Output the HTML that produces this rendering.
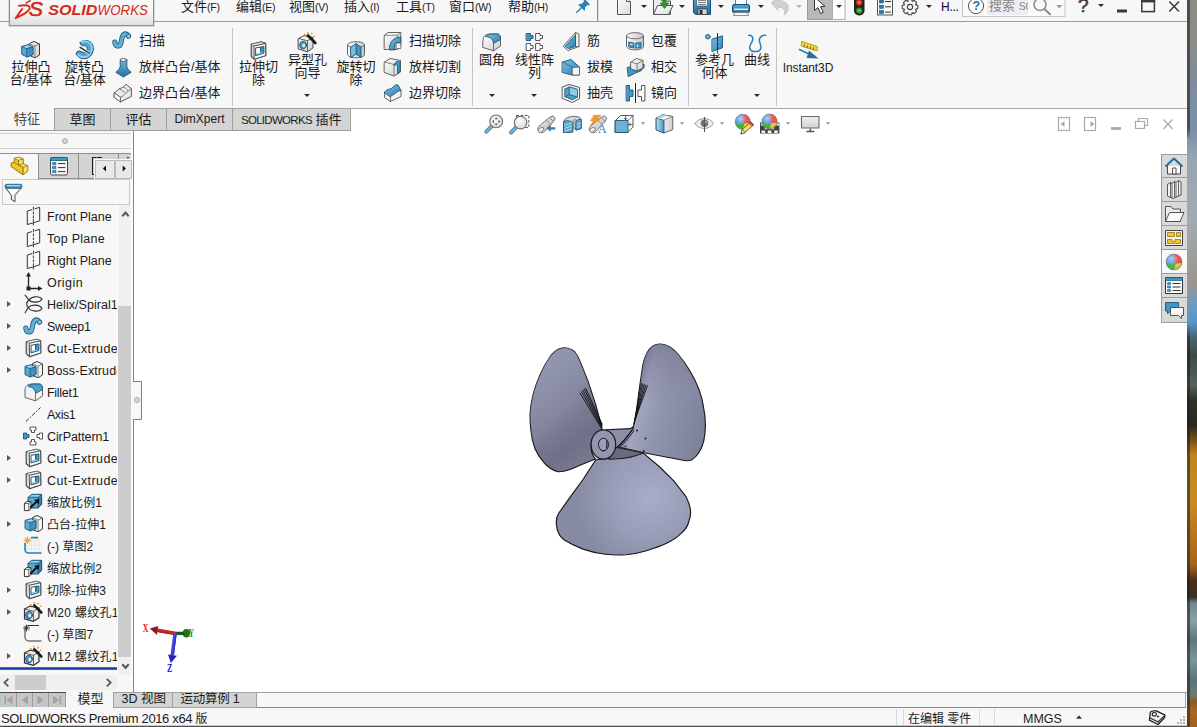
<!DOCTYPE html>
<html lang="zh-CN">
<head>
<meta charset="utf-8">
<title>SOLIDWORKS Premium 2016 x64</title>
<style>
*{box-sizing:border-box;margin:0;padding:0}
html,body{width:1197px;height:727px;overflow:hidden;background:#fff}
body{font-family:"Liberation Sans","Noto Sans CJK SC",sans-serif;font-size:13px;color:#1a1a1a;position:relative}
.abs{position:absolute}
#win{position:absolute;left:0;top:0;width:1187px;height:727px;background:#f7f7f7;overflow:hidden}
#wall{position:absolute;left:1187px;top:0;width:10px;height:727px;
 background:linear-gradient(to bottom,#8b8d85 0,#8a8e88 45px,#7e8d9c 75px,#7c90a6 130px,#97a5b1 160px,#a0abb4 220px,#9d9f9c 255px,#9a968c 285px,#6f9cc0 303px,#5a96c8 322px,#4a6878 336px,#3e4a44 355px,#55655c 385px,#2e342a 400px,#2a2a1e 425px,#7a5018 440px,#c08420 455px,#c98c24 500px,#b4741c 540px,#a4641a 565px,#4a3218 580px,#3a3020 597px,#6c8890 603px,#8aa0aa 620px,#60787c 640px,#7c949c 660px,#5c747a 680px,#6f7a70 695px,#8a5a24 702px,#a8681e 712px,#a0601c 727px)}
#walledge{position:absolute;left:1187px;top:0;width:3px;height:727px;background:linear-gradient(to bottom,rgba(60,60,60,.8) 0,rgba(60,60,60,.8) 128px,rgba(60,60,60,0) 140px,rgba(40,40,40,0) 325px,rgba(30,30,30,.6) 340px,rgba(30,30,30,.55) 727px)}
/* menu bar */
#menubar{position:absolute;left:0;top:0;width:1187px;height:21px;background:#f7f7f7}
#menuline{position:absolute;left:0;top:21px;width:1187px;height:1px;background:#9c9c9c}
#logo{position:absolute;left:9px;top:-2px;width:145px;height:28px;border:1px solid #8f8f8f;box-shadow:0 0 0 .4px #aaa;background:linear-gradient(to bottom,#fafafa 0,#f4f4f4 55%,#dedede 100%)}
.menu{position:absolute;top:-3px;height:20px;line-height:20px;font-size:13px;white-space:nowrap;color:#1a1a1a}
.menu small{font-size:10.5px;letter-spacing:-.2px}
.dd{position:absolute;width:0;height:0;border-left:3px solid transparent;border-right:3px solid transparent;border-top:3.2px solid #2a2a2a;margin-left:.5px;margin-top:.6px}
.hd{border-top-color:#9a9a9a !important;border-left-width:2.8px !important;border-right-width:2.8px !important;border-top-width:3px !important;margin:0 !important}
/* ribbon */
#ribbon{position:absolute;left:0;top:22px;width:1187px;height:86px;background:#f7f7f7}
.vsep{position:absolute;top:28px;width:1px;height:78px;background:#c4c4c4}
.big{position:absolute;text-align:center;font-size:13px;line-height:13px;white-space:nowrap;transform:translateX(-50%)}
.sm{position:absolute;font-size:13px;line-height:16px;height:16px;white-space:nowrap}
#ribline{position:absolute;left:54px;top:108px;width:1133px;height:1px;background:#a6a6a6}
/* cm tabs */
.ctab{position:absolute;top:108px;height:23px;border:1px solid #9e9e9e;background:#d4d4d4;text-align:center;line-height:21px;font-size:13px;white-space:nowrap}
/* viewport */
#view{position:absolute;left:134px;top:109px;width:1053px;height:583px;background:#fff}
/* left panel */
#lp{position:absolute;left:0;top:131px;width:134px;height:561px;background:#f7f7f7;border-right:1px solid #858585}
.row{position:absolute;left:47px;height:22px;line-height:22px;padding-top:1px;font-size:12px;white-space:nowrap;width:70px;overflow:hidden;letter-spacing:.05px}
.exp{position:absolute;left:7px;width:0;height:0;border-top:3.500px solid transparent;border-bottom:3.500px solid transparent;border-left:4.300px solid #585858;margin-top:.5px}
.ti{position:absolute;left:22px;width:22px;height:22px}
/* bottom */
.btab{position:absolute;top:692px;height:16px;border:1px solid #a0a0a0;background:#d4d4d4;font-size:13px;line-height:13px;text-align:center;white-space:nowrap}
#status{position:absolute;left:0;top:708px;width:1187px;height:19px;background:#f7f7f7;font-size:13px;line-height:21px}
svg{position:absolute;overflow:visible}
</style>
</head>
<body>
<div id="win">

<!-- ===== viewport ===== -->
<div id="view"></div>

<!-- ===== menu bar ===== -->
<div id="menuline"></div>
<div id="logo"></div>
<!--LOGO-->
<div class="menu" style="left:181px">文件<small>(F)</small></div>
<div class="menu" style="left:236px">编辑<small>(E)</small></div>
<div class="menu" style="left:289px">视图<small>(V)</small></div>
<div class="menu" style="left:344px">插入<small>(I)</small></div>
<div class="menu" style="left:396px">工具<small>(T)</small></div>
<div class="menu" style="left:449px">窗口<small>(W)</small></div>
<div class="menu" style="left:508px">帮助<small>(H)</small></div>
<!--QAT-S-->
<svg style="left:0;top:0" width="1187" height="26" viewBox="0 0 1187 26">
 <defs>
  <linearGradient id="gPaper" x1="0" y1="0" x2="1" y2="1"><stop offset="0" stop-color="#ffffff"/><stop offset="1" stop-color="#d9d9d9"/></linearGradient>
  <linearGradient id="gBlue" x1="0" y1="0" x2="0" y2="1"><stop offset="0" stop-color="#5aa9d3"/><stop offset="1" stop-color="#1f6d9e"/></linearGradient>
  <clipPath id="clipTop"><rect x="0" y="0" width="1187" height="21"/></clipPath>
 </defs>
 <!-- logo -->
 <g fill="#d8281b">
  <path d="M18.200 5.900 C22 5.200 27 4.800 29 6.200 C31.500 8.200 28.500 12.400 15.600 18.200 L22.500 8.400" fill="none" stroke="#d8281b" stroke-width="1.900" stroke-linejoin="round" stroke-linecap="butt"/>
  <path d="M25.600 3.300 L30.800 0.300" fill="none" stroke="#d8281b" stroke-width="1.500"/>
  <text x="28.800" y="15.600" font-family="Liberation Sans,sans-serif" font-size="19.800" font-weight="400" font-style="italic" textLength="14.200" lengthAdjust="spacingAndGlyphs" stroke="#d8281b" stroke-width=".55">S</text>
  <text x="48.300" y="15.300" font-family="Liberation Sans,sans-serif" font-size="14.600" font-weight="700" font-style="italic" textLength="49" lengthAdjust="spacingAndGlyphs">SOLID</text>
  <text x="97.600" y="15.300" font-family="Liberation Sans,sans-serif" font-size="14.600" font-weight="400" font-style="italic" textLength="50.400" lengthAdjust="spacingAndGlyphs">WORKS</text>
 </g>
 <g clip-path="url(#clipTop)">
 <!-- pin -->
 <g transform="translate(582 7) rotate(45)" fill="#2d7db3">
  <rect x="-3.6" y="-7.5" width="7.2" height="2"/>
  <rect x="-2.4" y="-6" width="4.8" height="5"/>
  <path d="M-4.6 1 L4.6 1 L3.2 -1.4 L-3.2 -1.4 Z"/>
  <rect x="-0.7" y="1" width="1.4" height="7"/>
 </g>
 <!-- separator -->
 <rect x="597" y="0" width="1" height="21" fill="#8e8e8e"/>
 <rect x="598" y="0" width="1" height="21" fill="#dcdcdc"/>
 <!-- new -->
 <path d="M617.5 -3 L626.5 -3 L630.5 1.5 L630.5 14.5 L617.5 14.5 Z" fill="url(#gPaper)" stroke="#555" stroke-width="1"/>
 <path d="M626.5 -3 L626.5 1.5 L630.5 1.5" fill="#eee" stroke="#555" stroke-width="1"/>
 <!-- open -->
 <path d="M653.5 -2 L660 -2 L662 1 L670.5 1 L670.5 14.5 L653.5 14.5 Z" fill="#ececec" stroke="#555"/>
 <path d="M657.5 5.5 L673 5.5 L668.5 14.5 L653.5 14.5 Z" fill="url(#gPaper)" stroke="#555"/>
 <path d="M663 -3 L666 -3 L666 3 L669 3 L664.5 8.5 L660 3 L663 3 Z" fill="#2e9a22" stroke="#1d6e14" stroke-width=".6"/>
 <!-- save -->
 <path d="M693.5 -3 L710.5 -3 L710.5 14.5 L695.5 14.5 L693.5 12.5 Z" fill="url(#gBlue)" stroke="#174f74"/>
 <rect x="696.5" y="-3" width="11" height="9" fill="#f2f2f2" stroke="#555" stroke-width=".7"/>
 <path d="M698 0.5 H706 M698 2.5 H706 M698 4.5 H706" stroke="#666" stroke-width=".8"/>
 <rect x="698" y="9" width="9" height="5.5" fill="#d8d8d8" stroke="#333" stroke-width=".7"/>
 <rect x="699.5" y="10" width="3" height="4" fill="#333"/>
 <!-- print -->
 <path d="M735.5 -3 L746.5 -3 L746.5 5 L735.5 5 Z" fill="#fafafa" stroke="#777"/>
 <rect x="732.5" y="4.5" width="17" height="8" rx="1.5" fill="url(#gBlue)" stroke="#174f74"/>
 <rect x="734" y="8.5" width="14" height="1.6" fill="#d6ecf7"/>
 <path d="M734.5 12.5 L747.5 12.5 L748.5 15.5 L733.5 15.5 Z" fill="#f4f4f4" stroke="#777" stroke-width=".8"/>
 <!-- undo (disabled) -->
 <path d="M771 3 L778 -3 L778 0.5 C785 0 789.5 4 788 10 C787.4 12.4 786 14 784 14.8 C785.4 12 785.4 7.6 778 7.2 L778 10.5 Z" fill="#d0d0d0" stroke="#bdbdbd" stroke-width=".7"/>
 <!-- select -->
 <rect x="807.5" y="-1" width="25" height="20.5" fill="#b9b9b9" stroke="#7da0c6"/>
 <rect x="832.5" y="-1" width="12.5" height="20.5" fill="#fdfdfd" stroke="#adadad"/>
 <path d="M814.5 -3 L814.5 10.5 L818 7.6 L820.6 13.6 L823.2 12.4 L820.6 6.6 L825 6.4 Z" fill="#fff" stroke="#333" stroke-width="1"/>
 <!-- traffic light -->
 <rect x="854" y="-4" width="10.5" height="19.5" rx="5" fill="#222"/>
 <circle cx="859.2" cy="2.4" r="3.1" fill="#e02a1a"/>
 <circle cx="859.2" cy="10.6" r="3.1" fill="#2d9a22"/>
 <path d="M857.6 2.4 H860.8 M859.2 .8 V4" stroke="#ff9a8a" stroke-width=".7"/>
 <path d="M857.6 10.6 H860.8 M859.2 9 V12.2" stroke="#9be08f" stroke-width=".7"/>
 <!-- options -->
 <rect x="877.5" y="-3" width="15" height="18" fill="#fafafa" stroke="#555"/>
 <g fill="#2d7db3" stroke="#174f74" stroke-width=".6"><rect x="879.5" y="0" width="4" height="3"/><rect x="879.5" y="5.3" width="4" height="3"/><rect x="879.5" y="10.6" width="4" height="3"/></g>
 <path d="M885 1.5 H891 M885 6.8 H891 M885 12.1 H891" stroke="#333" stroke-width="1"/>
 <!-- gear -->
 <g transform="translate(910 7)" fill="none" stroke="#444" stroke-width="1.1">
  <path d="M-1.6 -7.8 L1.6 -7.8 L2.2 -5.6 L4.3 -6.7 L6.6 -4.4 L5.5 -2.3 L7.8 -1.6 L7.8 1.6 L5.5 2.3 L6.6 4.4 L4.3 6.7 L2.2 5.6 L1.6 7.8 L-1.6 7.8 L-2.2 5.6 L-4.3 6.7 L-6.6 4.4 L-5.5 2.3 L-7.8 1.6 L-7.8 -1.6 L-5.5 -2.3 L-6.6 -4.4 L-4.3 -6.7 L-2.2 -5.6 Z" fill="#f4f4f4" stroke-linejoin="round"/>
  <circle r="2.6" fill="#f7f7f7"/>
 </g>
 <!-- search box -->
 <rect x="962.5" y="-2" width="102.5" height="18.5" fill="#fafafa" stroke="#c6c6c6"/>
 <rect x="987" y="-1" width="41" height="16" fill="#eceef4"/>
 <circle cx="976" cy="6" r="7.6" fill="#fdfdfd" stroke="#555" stroke-width="1"/>
 <text x="972.6" y="10.4" font-family="Liberation Sans,sans-serif" font-size="12.5" font-weight="700" fill="#1f6fa8">?</text>
 <circle cx="1040" cy="4.5" r="6" fill="none" stroke="#8c8c8c" stroke-width="1.6"/>
 <path d="M1044.4 9 L1050 14.2" stroke="#8c8c8c" stroke-width="2.2" stroke-linecap="round"/>
 <path d="M1056.3 5 L1062.3 5 L1059.3 8.4 Z" fill="#9a9a9a"/>
 <!-- window buttons -->
 <rect x="1117" y="9.5" width="10" height="3" fill="#3a3a3a"/>
 <rect x="1141.8" y="-1" width="12.6" height="12.6" fill="none" stroke="#3a3a3a" stroke-width="1.5"/>
 <rect x="1141" y="0" width="14.2" height="2.4" fill="#3a3a3a"/>
 <path d="M1169.3 1.6 L1179 11.6 M1179 1.6 L1169.3 11.6" stroke="#3a3a3a" stroke-width="1.5"/>
 </g>
</svg>
<div class="dd" style="left:640px;top:4px"></div>
<div class="dd" style="left:678.5px;top:4px"></div>
<div class="dd" style="left:717.5px;top:4px"></div>
<div class="dd" style="left:757px;top:4px"></div>
<div class="dd" style="left:795.5px;top:4px;border-top-color:#b4b4b4"></div>
<div class="dd" style="left:835px;top:4px"></div>
<div class="dd" style="left:925.5px;top:4px"></div>
<div class="dd" style="left:1097.5px;top:3px"></div>
<div class="abs" style="left:941px;top:-3px;font-size:12px;line-height:20px;font-weight:400;color:#1a1040;letter-spacing:-.25px;-webkit-text-stroke:.12px #1a1040">H...</div>
<div class="abs" style="left:989px;top:-4px;font-size:13px;line-height:20px;color:#888;width:38.500px;overflow:hidden;white-space:nowrap">搜索 <span style="font-size:10.500px;letter-spacing:-.2px">SO</span></div>
<div class="abs" style="left:1078px;top:-6px;font-size:19px;line-height:24px;font-weight:400;color:#3c3c3c;-webkit-text-stroke:.55px #3c3c3c">?</div>
<!--QAT-E-->

<!-- ===== ribbon ===== -->
<!--RIBBON-S-->
<div class="vsep" style="left:232px"></div>
<div class="vsep" style="left:472px"></div>
<div class="vsep" style="left:688px"></div>
<div class="vsep" style="left:776px"></div>
<div class="big" style="left:31px;top:60px">拉伸凸<br>台/基体</div>
<div class="big" style="left:84.5px;top:60px">旋转凸<br>台/基体</div>
<div class="sm" style="left:139px;top:32.5px">扫描</div>
<div class="sm" style="left:139px;top:58.5px">放样凸台/基体</div>
<div class="sm" style="left:139px;top:84.5px">边界凸台/基体</div>
<div class="big" style="left:258.5px;top:60px">拉伸切<br>除</div>
<div class="big" style="left:307.5px;top:52.5px">异型孔<br>向导</div>
<div class="big" style="left:356px;top:60px">旋转切<br>除</div>
<div class="sm" style="left:409px;top:32.5px">扫描切除</div>
<div class="sm" style="left:409px;top:58.5px">放样切割</div>
<div class="sm" style="left:409px;top:84.5px">边界切除</div>
<div class="big" style="left:492px;top:52.5px">圆角</div>
<div class="big" style="left:534.5px;top:52.5px">线性阵<br>列</div>
<div class="sm" style="left:587px;top:32.5px">筋</div>
<div class="sm" style="left:587px;top:58.5px">拔模</div>
<div class="sm" style="left:587px;top:84.5px">抽壳</div>
<div class="sm" style="left:651px;top:32.5px">包覆</div>
<div class="sm" style="left:651px;top:58.5px">相交</div>
<div class="sm" style="left:651px;top:84.5px">镜向</div>
<div class="big" style="left:714.5px;top:52.5px">参考几<br>何体</div>
<div class="big" style="left:757px;top:52.5px">曲线</div>
<div class="big" id="i3d" style="left:808px;top:62px;font-size:12px;letter-spacing:-.1px">Instant3D</div>
<div class="dd" style="left:303.5px;top:93px"></div>
<div class="dd" style="left:488px;top:93px"></div>
<div class="dd" style="left:530.5px;top:93px"></div>
<div class="dd" style="left:711px;top:93px"></div>
<div class="dd" style="left:753px;top:93px"></div>
<svg style="left:0;top:0" width="1187" height="108" viewBox="0 0 1187 108">
 <defs>
  <linearGradient id="bl" x1="0" y1="0" x2="1" y2="1"><stop offset="0" stop-color="#7cc0e0"/><stop offset="1" stop-color="#2b7fb0"/></linearGradient>
  <linearGradient id="bl2" x1="0" y1="0" x2="0" y2="1"><stop offset="0" stop-color="#6fb6da"/><stop offset="1" stop-color="#256f9c"/></linearGradient>
  <linearGradient id="gr" x1="0" y1="0" x2="1" y2="1"><stop offset="0" stop-color="#ffffff"/><stop offset="1" stop-color="#cfcfcf"/></linearGradient>
  <linearGradient id="gr2" x1="0" y1="0" x2="1" y2="0"><stop offset="0" stop-color="#fdfdfd"/><stop offset="1" stop-color="#c4c4c4"/></linearGradient>
 </defs>
 <g stroke-linejoin="round" stroke-linecap="round">
 <!-- 1 extrude boss -->
 <g id="icExtr">
  <path d="M29.5 43.5 L34 41.5 L39.5 44 L39.5 55 L35 57.8 L29.5 55.5 Z" fill="url(#gr)" stroke="#3a3a3a" stroke-width="1"/>
  <path d="M35 46.2 L35 57.8 M29.5 43.5 L35 46.2 L39.5 44" fill="none" stroke="#666" stroke-width=".8"/>
  <path d="M22 46.5 L28 44.8 L33 46.8 L33 54.5 L27 57 L22 54.5 Z" fill="#5aaad6" stroke="#1b5577" stroke-width=".9"/>
  <path d="M22 46.5 L28 44.8 L33 46.8 L27 48.6 Z" fill="#a2d8ee" stroke="#1b5577" stroke-width=".7"/>
  <path d="M27 48.6 L33 46.8 L33 54.5 L27 57 Z" fill="#3f93c4" stroke="#1b5577" stroke-width=".7"/>
 </g>
 <!-- 2 revolve boss -->
 <path d="M80.200 42.600 C82 40 88 39.600 91 42.500 C94.500 46 94 52.500 90 56.500 C86 60 80 59.500 76.300 54.500 C75.800 52.500 77.500 50.800 80 51 C82.500 53 85.500 52.500 87 50 C88 48 86.500 45.800 84.300 45.600 C82.500 46.500 80 45 80.200 42.600 Z" fill="#4fa3cf" stroke="#14507a" stroke-width="1"/>
 <path d="M82 41.800 C85 40.800 89 41.500 91 44.500 C93 48 91.500 53 88.500 55.500 C85.500 58 81 57.500 78.500 55" fill="none" stroke="#8ed0ec" stroke-width="2" stroke-linecap="round"/>
 <path d="M80.100 47.400 L89.500 53.200" stroke="#f7f7f7" stroke-width="2.800" stroke-linecap="butt"/>
 <path d="M80.100 47.400 L89.500 53.200" stroke="#222" stroke-width="1.300"/>
 <!-- 3 sweep -->
 <g id="icSweep" fill="none" stroke-linecap="round">
  <path d="M114.800 42 C115 46.600 119.600 47.600 120.900 43 C122.100 39 121.800 34.200 125 33.900 C126.500 33.800 127.600 34.800 128.400 36" stroke="#1b5577" stroke-width="5.100"/>
  <path d="M114.800 42 C115 46.600 119.600 47.600 120.900 43 C122.100 39 121.800 34.200 125 33.900 C126.500 33.800 127.600 34.800 128.400 36" stroke="#62afd8" stroke-width="3.500"/>
  <circle cx="128.600" cy="36.200" r="2.100" fill="#8acbe8" stroke="#1b5577" stroke-width=".8"/>
 </g>
 <!-- 4 loft -->
 <path d="M120.200 60 L120.200 66.500 C120 68.500 118 70.500 115.800 72.300 L123.400 77 L131.200 72.300 C129 70.500 127 68.500 126.800 66.500 L126.800 60 Z" fill="url(#bl2)" stroke="#1b5577" stroke-width=".9"/>
 <ellipse cx="123.500" cy="60" rx="3.300" ry="1.500" fill="#f2f2f2" stroke="#444" stroke-width=".8"/>
 <!-- 5 boundary boss -->
 <path d="M114.400 93 L119.300 88.700 C121 88.300 122.400 87.700 123.200 87 C124.400 86 125 85 125.900 84.300 L131.400 88.700 L131.400 96.400 L120.400 101.900 L114.400 97.500 Z" fill="#e9e9e9" stroke="#4a4a4a" stroke-width=".9"/>
 <path d="M114.400 93 L120.400 97.200 L120.400 101.900 M120.400 97.200 C123 96.500 124.200 94.500 126 93 C127.600 91.700 129.500 90 131.400 88.700 M119.300 88.700 L124.500 92.300 M123.200 87 C125 87.500 126.500 88.500 128 91" fill="none" stroke="#5a5a5a" stroke-width=".7"/>
 <path d="M114.400 93 L120.400 97.200 L120.400 101.900 L114.400 97.500 Z" fill="#f8f8f8" stroke="#4a4a4a" stroke-width=".7"/>
 <!-- 6 extruded cut -->
 <g id="icCut"><path d="M251.2 44.3 L261.5 41.9 L265.6 43.3 L265.8 55.5 L254.5 59.3 L251.2 56.3 Z" fill="#dedede" stroke="#3c3c3c" stroke-width="1.100"/><path d="M251.2 44.3 L261.5 41.9 L265.6 43.4 L254.3 45.9 Z" fill="#f6f6f6" stroke="#555" stroke-width=".6"/><path d="M254.3 45.9 L265.6 43.4 L265.8 55.5 L254.5 59.2 Z" fill="#fbfbfb" stroke="#444" stroke-width=".9"/><path d="M256.0 47.9 L263.9 46.5 L263.9 53.1 L256.0 55.5 Z" fill="#ffffff" stroke="none"/><path d="M260.1 47.2 L263.9 46.5 L263.9 53.1 L260.1 52.4 Z" fill="#4a9fcc" stroke="none"/><path d="M260.1 47.2 L261.4 47.0 L261.4 52.6 L260.1 52.4 Z" fill="#175a82" stroke="none"/><path d="M256.0 52.9 L260.1 52.4 L263.9 53.1 L256.0 55.5 Z" fill="#a4d8ee" stroke="none"/><path d="M256.0 47.9 L263.9 46.5 L263.9 53.1 L256.0 55.5 Z" fill="none" stroke="#1b5577" stroke-width="1"/></g>
 <!-- 7 hole wizard -->
 <g id="icHole">
  <path d="M298.500 38.500 L304 35.700 L313 37.500 L313 47.800 L307.500 51.800 L298.500 49 Z" fill="url(#gr)" stroke="#444" stroke-width="1"/>
  <path d="M298.500 38.500 L307.500 40.800 L313 37.500 M307.500 40.800 L307.500 51.800" fill="none" stroke="#555" stroke-width=".9"/>
  <ellipse cx="303" cy="45" rx="3.400" ry="3.800" fill="#4a9fcc" stroke="#1b5577" stroke-width=".9"/>
  <ellipse cx="303.800" cy="45.500" rx="1.900" ry="2.300" fill="#e4f2f9" stroke="#1b5577" stroke-width=".5"/>
  <path d="M308 35.500 L315.300 43" stroke="#1c1c1c" stroke-width="2.600"/>
  <g fill="#f08a1c"><circle cx="304.500" cy="34.600" r=".9"/><circle cx="308" cy="32.800" r=".9"/><circle cx="311.800" cy="33.600" r=".9"/><circle cx="314.500" cy="36.200" r=".8"/><circle cx="301.800" cy="36.500" r=".7"/></g>
 </g>
 <!-- 8 revolved cut -->
 <path d="M347.500 45 C347.500 40.500 364.500 40.500 364.500 45 L364.500 54.500 C364.500 59 347.500 59 347.500 54.500 Z" fill="url(#gr2)" stroke="#555" stroke-width=".9"/>
 <path d="M347.500 45 C347.500 48.500 364.500 48.500 364.500 45" fill="none" stroke="#555" stroke-width=".8"/>
 <path d="M351 47.200 L356 43.800 L361 47.200 L361 57.300 L356 54 L351 57.300 Z" fill="#3f97c6" stroke="#1b5577" stroke-width=".9"/>
 <path d="M356 43.800 L356 54" stroke="#1b5577" stroke-width=".8"/>
 <path d="M351 47.200 L356 43.800 L356 54 L351 57.300 Z" fill="#7cc0e0" stroke="#1b5577" stroke-width=".6"/>
 <!-- 9 swept cut -->
 <path d="M384.500 35.300 L388 32.500 L400.800 32.500 L400.800 46.500 L397.500 49.500 L384.500 49.500 Z" fill="url(#gr)" stroke="#555" stroke-width=".9"/>
 <path d="M384.500 35.300 L397.500 35.300 L400.800 32.500 M397.500 35.300 L397.500 37" fill="none" stroke="#666" stroke-width=".7"/>
 <path d="M389.500 49.500 C389.500 42 393 37.500 400.800 37 L400.800 42.500 L396.500 42.500 C395 43.500 394.500 46 394.500 49.500 Z" fill="url(#bl)" stroke="#1b5577" stroke-width=".9"/>
 <rect x="396.500" y="43" width="4.300" height="5.500" fill="#f4f4f4" stroke="#555" stroke-width=".7"/>
 <!-- 10 loft cut -->
 <path d="M384.500 62 L390 58.500 L400.500 60.500 L400.500 72 L394 76 L384.500 72.500 Z" fill="url(#gr)" stroke="#555" stroke-width=".9"/>
 <path d="M384.500 62 L394 64.500 L394 76 M394 64.500 L400.500 60.500" fill="none" stroke="#666" stroke-width=".8"/>
 <path d="M394.500 64 C396 60.500 399.500 60.500 400 63.500 L400 72 L397.500 73.800 L397.500 66 C397.500 64.500 396 64.500 394.500 65.500 Z" fill="#3f97c6" stroke="#1b5577" stroke-width=".8"/>
 <!-- 11 boundary cut -->
 <path d="M384.500 92.500 L384.500 97.500 L390.500 101.500 L401 96.500 L401 90.500 Z" fill="#f4f4f4" stroke="#555" stroke-width=".9"/>
 <path d="M384.500 92.500 C386.500 88.500 389.500 90 392 88 C394 86 396 84 398 85 L401 90.500 C398.500 90.500 397 92 395 93.500 C393 95 392 95.500 390.500 96.500 Z" fill="url(#bl)" stroke="#1b5577" stroke-width=".9"/>
 <path d="M390.500 96.500 L390.500 101.500" stroke="#555" stroke-width=".8"/>
 <!-- 12 fillet -->
 <g id="icFillet">
  <path d="M483 40 C483 36 486 34 490 34 L497 34 C499.500 34 500.500 36 500.500 38.500 L500.500 46 L493.500 50.800 L483 47.500 Z" fill="url(#gr)" stroke="#555" stroke-width=".9"/>
  <path d="M486 36.500 C488 34.500 489.500 34 492 34 L497 34 C499.500 34 500.500 36 500.500 38.500 L500.500 39.500 L493.500 43.500 C493.500 40 491 37 486 36.500 Z" fill="url(#bl)" stroke="#1b5577" stroke-width=".9"/>
  <path d="M493.500 43.500 L493.500 50.800" stroke="#555" stroke-width=".8"/>
 </g>
 <!-- 13 linear pattern -->
 <g fill="#fdfdfd" stroke="#444" stroke-width=".9">
  <path d="M526.500 33.500 L530.500 33.500 L530.500 35.500 L533 35.500 L533 38.500 L530.500 38.500 L530.500 40.500 L526.500 40.500 Z" fill="#3f97c6" stroke="#1b5577"/>
  <path d="M536 33.500 L540 33.500 L540 35.500 L542.500 35.500 L542.500 38.500 L540 38.500 L540 40.500 L536 40.500 Z"/>
  <path d="M526.500 43.500 L530.500 43.500 L530.500 45.500 L533 45.500 L533 48.500 L530.500 48.500 L530.500 50.500 L526.500 50.500 Z"/>
  <path d="M536 43.500 L540 43.500 L540 45.500 L542.500 45.500 L542.500 48.500 L540 48.500 L540 50.500 L536 50.500 Z"/>
 </g>
 <!-- 14 rib -->
 <path d="M563.500 46 L575.500 32.500 L579 34 L579 46.500 L568.500 50.500 Z" fill="#ececec" stroke="#555" stroke-width=".9"/>
 <path d="M565.500 46 L575.500 35 L575.500 46.500 L569 48.500 Z" fill="url(#bl)" stroke="#1b5577" stroke-width=".9"/>
 <path d="M575.500 32.500 L575.500 46.500 L579 46.500" fill="none" stroke="#555" stroke-width=".7"/>
 <!-- 15 draft -->
 <path d="M562.500 62 L571 59.500 L579.500 67 L579.500 75 L571.500 75 L562.500 72.500 Z" fill="url(#bl)" stroke="#1b5577" stroke-width=".9"/>
 <path d="M572.500 67.500 L579.500 67 L579.500 75 L572.500 75 Z" fill="#f6f6f6" stroke="#555" stroke-width=".8"/>
 <path d="M562.500 62 L572.500 67.500" stroke="#1b5577" stroke-width=".7"/>
 <!-- 16 shell -->
 <path d="M562.500 87 L569 84.500 L579.500 87.500 L579.500 98.500 L572.500 102.500 L562.500 98.500 Z" fill="#fafafa" stroke="#444" stroke-width=".9"/>
 <path d="M565 88.800 L569.500 87 L577.500 89.300 L577.500 97 L572.500 99.800 L565 96.800 Z" fill="#4a9fcc" stroke="#1b5577" stroke-width=".8"/>
 <path d="M569.500 87 L569.500 94.500 L565 96.800 M569.500 94.500 L577.500 97" fill="none" stroke="#1b5577" stroke-width=".7"/>
 <path d="M569.500 87 L577.500 89.300 L577.500 97 L569.500 94.500 Z" fill="#8fcbe6" stroke="#1b5577" stroke-width=".6"/>
 <!-- 17 wrap -->
 <path d="M626.500 36 C626.500 31.500 643.500 31.500 643.500 36 L643.500 46.500 C643.500 51 626.500 51 626.500 46.500 Z" fill="url(#gr2)" stroke="#555" stroke-width=".9"/>
 <path d="M626.500 36 C626.500 39.800 643.500 39.800 643.500 36" fill="none" stroke="#555" stroke-width=".8"/>
 <path d="M629 42 L633.500 43 L633.500 48 L629 47 Z M635.500 43.200 L641 42.500 L641 47.500 L635.500 48.200 Z" fill="#3f97c6" stroke="#1b5577" stroke-width=".8"/>
 <path d="M630.500 44.200 L632.500 44.600 M637.500 45 L637.500 46.800" stroke="#e8f4fa" stroke-width="1"/>
 <!-- 18 intersect -->
 <path d="M627.500 67.500 L634 66 L634 71 L644 68 L644 64 L641.500 70.500 L634.500 73.500 L628.500 76.500 Z" fill="#3f97c6" stroke="#1b5577" stroke-width=".9"/>
 <path d="M631 62 L636.500 58.500 L643 60.500 L643 68 L637 71 L631 69 Z" fill="url(#gr)" stroke="#555" stroke-width=".9"/>
 <path d="M631 62 L637 64 L643 60.500 M637 64 L637 71" fill="none" stroke="#666" stroke-width=".8"/>
 <!-- 19 mirror -->
 <path d="M626.500 85.500 L629.500 85.500 L629.500 90 L633 90 L633 96.500 L629.500 96.500 L629.500 101 L626.500 101 Z" fill="#3f97c6" stroke="#1b5577" stroke-width=".9"/>
 <path d="M644.500 85.500 L641.500 85.500 L641.500 90 L638 90 L638 96.500 L641.500 96.500 L641.500 101 L644.500 101 Z" fill="#fdfdfd" stroke="#444" stroke-width=".9"/>
 <path d="M635.500 83.500 L635.500 102.500" stroke="#222" stroke-width="1"/>
 <!-- 20 ref geometry -->
 <path d="M712.300 39 L722.500 35.800 L722.500 47.800 L712.300 51.500 Z" fill="url(#bl)" stroke="#1b5577" stroke-width=".9"/>
 <path d="M717.500 33.500 L717.500 53" stroke="#222" stroke-width="1" stroke-dasharray="3 1.500"/>
 <circle cx="707.800" cy="36.700" r="2.300" fill="#6cb4d8" stroke="#1b5577" stroke-width=".9"/>
 <!-- 21 curves -->
 <path d="M748.600 35.400 C751.500 35 753.500 37 752.500 40.500 C751.800 43 749 45.500 749.800 48.500 C750.800 52.600 759.600 52.600 760.800 48.500 C761.800 45 758.500 42 759.500 39 C760.500 36 763 35 765.600 35.200" fill="none" stroke="#2f7fae" stroke-width="1.500"/>
 <!-- 22 instant3d -->
 <path d="M802 41.500 L817.500 46.500 L817 51 L801.500 46 Z" fill="#f2d43c" stroke="#a98c12" stroke-width=".8"/>
 <path d="M804.500 44.800 L804.300 46.800 M807.500 45.800 L807.300 47.800 M810.500 46.800 L810.300 48.800 M813.500 47.800 L813.300 49.800" stroke="#6a5608" stroke-width=".8"/>
 <path d="M799.500 49.500 L811 55" stroke="#2a7dae" stroke-width="1.600"/>
 <path d="M809 50.500 L818.500 58.500 L806.500 58 Z" fill="#2a6f9c"/>
 </g>
</svg>
<!--RIBBON-E-->
<div id="ribline"></div>

<!-- ===== command manager tabs ===== -->
<!--CTABS-S-->
<div class="ctab" style="left:54px;width:57px">草图</div>
<div class="ctab" style="left:110px;width:57px">评估</div>
<div class="ctab" style="left:166px;width:67px;font-size:12px">DimXpert</div>
<div class="ctab" style="left:232px;width:118.5px"><span style="font-size:11.5px;letter-spacing:-.7px">SOLIDWORKS</span> 插件</div>
<div class="abs" style="left:0;top:109px;width:54px;height:21px;text-align:center;line-height:21px;font-size:13.2px;color:#4a4a4a">特征</div>
<div class="abs" style="left:0;top:130px;width:134px;height:1px;background:#9e9e9e"></div>
<!--CTABS-E-->

<!-- ===== heads-up toolbar ===== -->
<!--HUD-S-->
<svg style="left:0;top:108px" width="1187" height="32" viewBox="0 108 1187 32">
 <defs>
  <radialGradient id="lens" cx=".4" cy=".35" r=".7"><stop offset="0" stop-color="#ffffff"/><stop offset="1" stop-color="#d4d8dc"/></radialGradient>
  <linearGradient id="tel" x1="0" y1="0" x2="1" y2="1"><stop offset="0" stop-color="#f4f4f4"/><stop offset="1" stop-color="#b4b4b4"/></linearGradient>
  <linearGradient id="cubeL" x1="0" y1="0" x2="1" y2="0"><stop offset="0" stop-color="#b4def0"/><stop offset="1" stop-color="#3f93c1"/></linearGradient>
  <linearGradient id="cubeR" x1="0" y1="0" x2="1" y2="0"><stop offset="0" stop-color="#ffffff"/><stop offset="1" stop-color="#cfcfcf"/></linearGradient>
  <radialGradient id="gloss" cx=".35" cy=".3" r=".75"><stop offset="0" stop-color="#fff" stop-opacity=".55"/><stop offset=".6" stop-color="#fff" stop-opacity="0"/><stop offset="1" stop-color="#000" stop-opacity=".18"/></radialGradient>
  <linearGradient id="scr" x1="0" y1="0" x2="0" y2="1"><stop offset="0" stop-color="#f0f0f0"/><stop offset="1" stop-color="#d2d2d2"/></linearGradient>
 </defs>
 <g stroke-linejoin="round" stroke-linecap="round">
 <!-- zoom to fit -->
 <path d="M491.300 126.600 L486.300 131.800" stroke="#2f6f98" stroke-width="3.800"/>
 <path d="M491.300 126.600 L486.300 131.800" stroke="#72b4d8" stroke-width="2.400"/>
 <circle cx="496.200" cy="121.400" r="6.400" fill="url(#lens)" stroke="#6e6e6e" stroke-width="1.100"/>
 <path d="M496.200 117.200 L497.800 119.200 L494.600 119.200 Z M496.200 125.600 L497.800 123.600 L494.600 123.600 Z M492 121.400 L494 119.800 L494 123 Z M500.400 121.400 L498.400 119.800 L498.400 123 Z" fill="#555" stroke="none"/>
 <!-- zoom area -->
 <rect x="516.500" y="115.500" width="12.300" height="12" fill="none" stroke="#444" stroke-width=".9" stroke-dasharray="2.600 1.600" stroke-linecap="butt"/>
 <path d="M516 127.400 L511 132.600" stroke="#2f6f98" stroke-width="3.800"/>
 <path d="M516 127.400 L511 132.600" stroke="#72b4d8" stroke-width="2.400"/>
 <circle cx="520.600" cy="122.600" r="6.300" fill="url(#lens)" stroke="#6e6e6e" stroke-width="1.100"/>
 <!-- previous view -->
 <g id="tel1">
  <path d="M549.500 117.500 L553 115.800 L555.300 118.600 L553.500 121.500 L544.500 131.500 C542.500 133.500 539.500 133 538.200 130.800 C537 128.500 538 126.500 540 125.300 Z" fill="url(#tel)" stroke="#6a6a6a" stroke-width=".9"/>
  <path d="M546.500 120.200 L550.700 124.500 M549.500 117.500 L553.500 121.500" fill="none" stroke="#777" stroke-width=".8"/>
  <ellipse cx="541" cy="129.800" rx="3.100" ry="2.100" fill="#ececec" stroke="#777" stroke-width=".8" transform="rotate(-38 541 129.800)"/>
 </g>
 <path d="M546.300 128.300 L550.800 124.800 L550.800 127.200 L555.300 127.200 L555.300 129.400 L550.800 129.400 L550.800 131.800 Z" fill="#2a7dae" stroke="none"/>
 <!-- section view -->
 <path d="M563.800 121.500 C564.500 115.500 580 114.500 581.200 119.500 L581.200 128.500 L576.200 130 L572.800 127 L572.800 132 L563.800 132.500 Z" fill="#d9d9d9" stroke="#5a5a5a" stroke-width=".9"/>
 <path d="M572.800 122.500 C573 118.500 576 118 576.200 121 L576.200 130 L572.800 127 Z" fill="#b9b9b9" stroke="#6a6a6a" stroke-width=".6"/>
 <path d="M563.800 121.500 C566 120 570.500 120.500 572.800 122.500 L572.800 132 L563.800 132.500 Z" fill="#5ea8d0" stroke="#1b5577" stroke-width=".8"/>
 <path d="M576.200 121 C577.500 119.500 580 119 581.200 119.500 L581.200 128.500 L576.200 130 Z" fill="#5ea8d0" stroke="#1b5577" stroke-width=".8"/>
 <path d="M564.500 125.500 L572 122.800 M564.500 128.500 L572 125.800 M564.500 131.500 L572 128.800 M576.800 124.500 L580.800 122.800 M576.800 127.500 L580.800 125.800" stroke="#cfe8f4" stroke-width=".8" stroke-linecap="butt"/>
 <!-- dynamic annotation -->
 <g transform="translate(51.500 0)">
  <path d="M549.500 117.500 L553 115.800 L555.300 118.600 L553.500 121.500 L544.500 131.500 C542.500 133.500 539.500 133 538.200 130.800 C537 128.500 538 126.500 540 125.300 Z" fill="url(#tel)" stroke="#6a6a6a" stroke-width=".9"/>
  <path d="M546.500 120.200 L550.700 124.500 M549.500 117.500 L553.500 121.500" fill="none" stroke="#777" stroke-width=".8"/>
  <ellipse cx="541" cy="129.800" rx="3.100" ry="2.100" fill="#ececec" stroke="#777" stroke-width=".8" transform="rotate(-38 541 129.800)"/>
 </g>
 <path d="M594 115.200 L601 115.200 L597.300 118.600 L600.500 118.600 L590.300 125.600 L593.800 120.700 L590.800 120.700 Z" fill="#f29a2e" stroke="#d97a14" stroke-width=".5"/>
 <text x="597.800" y="133.200" font-family="Liberation Serif,serif" font-size="12.500" fill="#3a86b4" stroke="none">A</text>
 <!-- view orientation -->
 <path d="M615.500 120.500 L620.500 115.500 L633 115.500 L633 127 L628 132.500 L615.500 132.500 Z" fill="#fbfbfb" stroke="#4a4a4a" stroke-width=".9"/>
 <rect x="615.500" y="120.500" width="12.500" height="12" fill="#6db2d6" stroke="#1b5577" stroke-width=".9"/>
 <path d="M628 120.500 L633 115.500" stroke="#4a4a4a" stroke-width=".8"/>
 <path d="M625.500 115.800 L625.500 119.600 M624.200 118.200 L625.500 119.800 L626.800 118.200 M632.600 124.500 L628.800 124.500 M630.200 123.200 L628.600 124.500 L630.200 125.800" fill="none" stroke="#333" stroke-width=".7"/>
 <!-- display style -->
 <path d="M656.500 118 L662.500 114.800 L672.800 116.500 L672.800 129.500 L664 133 L656.500 130 Z" fill="url(#cubeR)" stroke="#555" stroke-width=".9"/>
 <path d="M656.500 118 L664 120 L664 133 L656.500 130 Z" fill="url(#cubeL)" stroke="#1b5577" stroke-width=".8"/>
 <path d="M656.500 118 L662.500 114.800 L672.800 116.500 L664 120 Z" fill="#f4fafd" stroke="#555" stroke-width=".6"/>
 <path d="M656.500 118 L662.500 114.800 L667 115.600 L660 119 Z" fill="#a8d8ee" stroke="none"/>
 <!-- hide/show -->
 <path d="M695 123.500 C699 116.800 709.500 116.800 713.500 123.500 C709.500 130.200 699 130.200 695 123.500 Z" fill="#ececec" stroke="#9c9c9c" stroke-width="1"/>
 <circle cx="704.500" cy="123.200" r="3.700" fill="#6e6e6e"/>
 <circle cx="705.800" cy="122" r="1.300" fill="#a8a8a8"/>
 <path d="M704.500 117 L704.500 132" stroke="#555" stroke-width="1" stroke-linecap="butt"/>
 <!-- edit appearance -->
 <g id="ball1"><circle cx="742.80" cy="121.80" r="7.60" fill="#4a8fe0"/><path d="M744.30 123.50 L735.27 122.86 A7.60 7.60 0 0 1 742.27 114.22 Z" fill="#4a8fe0"/><path d="M744.30 123.50 L742.27 114.22 A7.60 7.60 0 0 1 750.33 122.86 Z" fill="#e8504a"/><path d="M744.30 123.50 L750.33 122.86 A7.60 7.60 0 0 1 742.67 129.40 Z" fill="#f2c830"/><path d="M744.30 123.50 L742.67 129.40 A7.60 7.60 0 0 1 735.27 122.86 Z" fill="#3cb43c"/><circle cx="742.80" cy="121.80" r="7.60" fill="url(#gloss)" stroke="#7a7a7a" stroke-width=".5"/></g>
 <path d="M741 133.600 L742.300 129.400 L750.800 121.800 L753.600 124.800 L745 132.400 Z" fill="#f4dc62" stroke="#444" stroke-width=".8"/>
 <path d="M749.300 123.100 L750.800 121.800 L753.600 124.800 L752.100 126.100 Z" fill="#d8483a" stroke="#444" stroke-width=".6"/>
 <path d="M741 133.600 L742.300 129.400 L745 132.400 Z" fill="#f0e4c4" stroke="#444" stroke-width=".6"/>
 <!-- apply scene -->
 <rect x="760" y="122.500" width="19.400" height="11" fill="#444"/>
 <path d="M761.500 130.500 h3.600 v2.500 h-3.600 Z M767.800 130.500 h3.600 v2.500 h-3.600 Z M774.200 130.500 h3.600 v2.500 h-3.600 Z M764.800 127 h3 v2.200 h-3 Z M771 127 h3 v2.200 h-3 Z M761 123.500 h2.500 v2 h-2.500 Z M776.500 123.500 h2.500 v2 h-2.500 Z" fill="#f2f2f2"/>
 <g><circle cx="769.60" cy="121.50" r="7.60" fill="#4a8fe0"/><path d="M771.10 123.20 L762.07 122.56 A7.60 7.60 0 0 1 769.07 113.92 Z" fill="#4a8fe0"/><path d="M771.10 123.20 L769.07 113.92 A7.60 7.60 0 0 1 777.13 122.56 Z" fill="#e8504a"/><path d="M771.10 123.20 L777.13 122.56 A7.60 7.60 0 0 1 769.47 129.10 Z" fill="#f2c830"/><path d="M771.10 123.20 L769.47 129.10 A7.60 7.60 0 0 1 762.07 122.56 Z" fill="#3cb43c"/><circle cx="769.60" cy="121.50" r="7.60" fill="url(#gloss)" stroke="#7a7a7a" stroke-width=".5"/></g>
 <!-- view settings -->
 <rect x="801.500" y="116.500" width="17.500" height="11.500" fill="url(#scr)" stroke="#6a6a6a" stroke-width="1.100"/>
 <path d="M810.300 128.500 L810.300 131 M806.300 131.500 L814.300 131.500" stroke="#555" stroke-width="1.500" stroke-linecap="butt"/>
 <!-- doc window buttons -->
 <g fill="none" stroke="#aaaaaa" stroke-width="1.200" stroke-linecap="butt" stroke-linejoin="miter">
  <rect x="1058.500" y="117.500" width="11" height="13"/>
  <path d="M1064.500 121 L1064.500 127 L1060.500 124 Z" fill="#aaa" stroke="none"/>
  <rect x="1084.500" y="117.500" width="11" height="13"/>
  <path d="M1090.500 121 L1090.500 127 L1094.500 124 Z" fill="#aaa" stroke="none"/>
  <path d="M1111 128.500 H1121" stroke-width="2.800"/>
  <path d="M1138.500 121.500 V118.500 H1147.500 V125.500 H1144.500"/>
  <rect x="1135.500" y="121.500" width="9" height="7"/>
  <path d="M1163.500 119.500 L1172.500 129 M1172.500 119.500 L1163.500 129" stroke-width="1.300"/>
 </g>
 </g>
</svg>
<div class="dd hd" style="left:640.500px;top:122px"></div>
<div class="dd hd" style="left:680.200px;top:122px"></div>
<div class="dd hd" style="left:720.400px;top:122px"></div>
<div class="dd hd" style="left:786.300px;top:122px"></div>
<div class="dd hd" style="left:826.300px;top:122px"></div>
<!--HUD-E-->

<!-- ===== left panel ===== -->
<div id="lp"></div>
<!--LP-S-->
<div class="abs" style="left:0;top:133px;width:131px;height:1px;background:#cfcfcf"></div>
<div class="abs" style="left:0;top:148px;width:131px;height:1px;background:#cfcfcf"></div>
<div class="abs" style="left:62px;top:138px;width:6px;height:6px;border-radius:50%;background:#d9d9d9;border:1px solid #a8a8a8"></div>
<div class="abs" style="left:38px;top:153px;width:41px;height:26px;background:#d4d4d4;border:1px solid #8e8e8e"></div>
<div class="abs" style="left:78px;top:153px;width:41px;height:26px;background:#d4d4d4;border:1px solid #8e8e8e"></div>
<div class="abs" style="left:118px;top:153px;width:14px;height:26px;background:#d4d4d4;border:1px solid #8e8e8e;border-right:none"></div>
<div class="abs" style="left:0;top:153px;width:39px;height:1px;background:#8e8e8e"></div>
<div class="abs" style="left:2px;top:179px;width:128px;height:26px;background:#f7f7f7;border:1px solid #c9c9c9"></div>
<div class="abs" style="left:117px;top:205px;width:1px;height:470px;background:#fdfdfd"></div>
<div class="abs" style="left:118px;top:205px;width:13px;height:470px;background:#f0f0f0"></div>
<div class="abs" style="left:118px;top:306px;width:13px;height:351px;background:#cdcdcd"></div>
<div class="abs" style="left:131px;top:131px;width:2px;height:561px;background:#fbfbfb"></div>
<div class="row" style="top:205px;font-size:12.5px;letter-spacing:0.00px">Front Plane</div>
<svg class="ti" style="top:205px" width="22" height="22" viewBox="0 0 22 22"><use href="#t_plane"/></svg>
<div class="row" style="top:227px;font-size:12.5px;letter-spacing:0.26px">Top Plane</div>
<svg class="ti" style="top:227px" width="22" height="22" viewBox="0 0 22 22"><use href="#t_plane"/></svg>
<div class="row" style="top:249px;font-size:12.5px;letter-spacing:0.00px">Right Plane</div>
<svg class="ti" style="top:249px" width="22" height="22" viewBox="0 0 22 22"><use href="#t_plane"/></svg>
<div class="row" style="top:271px;font-size:12.5px;letter-spacing:0.46px">Origin</div>
<svg class="ti" style="top:271px" width="22" height="22" viewBox="0 0 22 22"><use href="#t_origin"/></svg>
<div class="row" style="top:293px;font-size:12.5px;letter-spacing:0.05px">Helix/Spiral1</div>
<div class="exp" style="top:300px"></div>
<svg class="ti" style="top:293px" width="22" height="22" viewBox="0 0 22 22"><use href="#t_helix"/></svg>
<div class="row" style="top:315px;font-size:12.5px;letter-spacing:-0.24px">Sweep1</div>
<div class="exp" style="top:322px"></div>
<svg class="ti" style="top:315px" width="22" height="22" viewBox="0 0 22 22"><use href="#t_sweep"/></svg>
<div class="row" style="top:337px;font-size:12.5px;letter-spacing:0.40px">Cut-Extrude1</div>
<div class="exp" style="top:344px"></div>
<svg class="ti" style="top:337px" width="22" height="22" viewBox="0 0 22 22"><use href="#t_cut"/></svg>
<div class="row" style="top:359px;font-size:12.5px;letter-spacing:0.10px">Boss-Extrude1</div>
<div class="exp" style="top:366px"></div>
<svg class="ti" style="top:359px" width="22" height="22" viewBox="0 0 22 22"><use href="#t_boss"/></svg>
<div class="row" style="top:381px;font-size:12.5px;letter-spacing:-0.28px">Fillet1</div>
<svg class="ti" style="top:381px" width="22" height="22" viewBox="0 0 22 22"><use href="#t_fillet"/></svg>
<div class="row" style="top:403px;font-size:12.5px;letter-spacing:-0.47px">Axis1</div>
<svg class="ti" style="top:403px" width="22" height="22" viewBox="0 0 22 22"><use href="#t_axis"/></svg>
<div class="row" style="top:425px;font-size:12.5px;letter-spacing:-0.09px">CirPattern1</div>
<svg class="ti" style="top:425px" width="22" height="22" viewBox="0 0 22 22"><use href="#t_cirp"/></svg>
<div class="row" style="top:447px;font-size:12.5px;letter-spacing:0.40px">Cut-Extrude2</div>
<div class="exp" style="top:454px"></div>
<svg class="ti" style="top:447px" width="22" height="22" viewBox="0 0 22 22"><use href="#t_cut"/></svg>
<div class="row" style="top:469px;font-size:12.5px;letter-spacing:0.40px">Cut-Extrude3</div>
<div class="exp" style="top:476px"></div>
<svg class="ti" style="top:469px" width="22" height="22" viewBox="0 0 22 22"><use href="#t_cut"/></svg>
<div class="row" style="top:491px">缩放比例1</div>
<svg class="ti" style="top:491px" width="22" height="22" viewBox="0 0 22 22"><use href="#t_scale"/></svg>
<div class="row" style="top:513px">凸台-拉伸1</div>
<div class="exp" style="top:520px"></div>
<svg class="ti" style="top:513px" width="22" height="22" viewBox="0 0 22 22"><use href="#t_boss"/></svg>
<div class="row" style="top:535px">(-) 草图2</div>
<svg class="ti" style="top:535px" width="22" height="22" viewBox="0 0 22 22"><use href="#t_sketch"/></svg>
<div class="row" style="top:557px">缩放比例2</div>
<svg class="ti" style="top:557px" width="22" height="22" viewBox="0 0 22 22"><use href="#t_scale"/></svg>
<div class="row" style="top:579px">切除-拉伸3</div>
<div class="exp" style="top:586px"></div>
<svg class="ti" style="top:579px" width="22" height="22" viewBox="0 0 22 22"><use href="#t_cut"/></svg>
<div class="row" style="top:601px;letter-spacing:0.30px">M20 螺纹孔1</div>
<div class="exp" style="top:608px"></div>
<svg class="ti" style="top:601px" width="22" height="22" viewBox="0 0 22 22"><use href="#t_hole"/></svg>
<div class="row" style="top:623px">(-) 草图7</div>
<svg class="ti" style="top:623px" width="22" height="22" viewBox="0 0 22 22"><use href="#t_sketch2"/></svg>
<div class="row" style="top:645px;letter-spacing:0.30px">M12 螺纹孔1</div>
<div class="exp" style="top:652px"></div>
<svg class="ti" style="top:645px" width="22" height="22" viewBox="0 0 22 22"><use href="#t_hole"/></svg>
<svg style="left:0;top:0" width="0" height="0">
 <defs>
  <g id="t_plane" fill="none" stroke="#333" stroke-width="1" stroke-linejoin="miter">
   <path d="M10 4.600 L5.300 6 L5.300 19.600 L17.700 15.800 L17.700 2.300 L12.800 3.800"/>
   <path d="M11.400 1.800 L11.400 20.300" stroke-dasharray="3.600 1.200 2.600 1.200 2.600 1.200 2.600 1.200 3"/>
  </g>
  <g id="t_origin" fill="none" stroke="#222" stroke-width="1.300">
   <path d="M6.500 4 L6.500 17.500 L17 17.500"/>
   <path d="M6.500 1 L9 5.500 L4 5.500 Z M20.500 17.500 L16 15 L16 20 Z" fill="#222" stroke="none"/>
   <rect x="4.500" y="15.500" width="4" height="4" fill="#222" stroke="none"/>
  </g>
  <g id="t_helix" fill="none" stroke="#2a2a2a" stroke-width="1.100" stroke-linecap="round">
   <path d="M3.100 2.200 L6.900 7 C10 3 17.500 2.600 20 6.200 C17.500 10 10 10 6.900 7 C4 9.500 4 12 6.200 14.500 C9.500 11 17.500 11.500 20 15.200 C17.500 19.500 9.500 19 6.200 14.500 L3.100 19.700"/>
  </g>
  <g id="t_sweep" stroke-linecap="round" fill="none">
   <path d="M3.800 13 C4 17.600 8.600 18.600 9.900 14 C11.100 10 10.800 5.200 14 4.900 C15.500 4.800 16.600 5.800 17.400 7" stroke="#1b5577" stroke-width="5.100"/>
   <path d="M3.800 13 C4 17.600 8.600 18.600 9.900 14 C11.100 10 10.800 5.200 14 4.900 C15.500 4.800 16.600 5.800 17.400 7" stroke="#62afd8" stroke-width="3.500"/>
   <circle cx="17.600" cy="7.200" r="2.100" fill="#8acbe8" stroke="#1b5577" stroke-width=".8"/>
  </g>
  <g id="t_cut" stroke-linejoin="round"><path d="M4.2 4.7 L14.5 2.3 L18.6 3.7 L18.8 15.9 L7.5 19.7 L4.2 16.7 Z" fill="#dedede" stroke="#3c3c3c" stroke-width="1.100"/><path d="M4.2 4.7 L14.5 2.3 L18.6 3.8 L7.3 6.3 Z" fill="#f6f6f6" stroke="#555" stroke-width=".6"/><path d="M7.3 6.3 L18.6 3.8 L18.8 15.9 L7.5 19.6 Z" fill="#fbfbfb" stroke="#444" stroke-width=".9"/><path d="M9.0 8.3 L16.9 6.9 L16.9 13.5 L9.0 15.9 Z" fill="#ffffff" stroke="none"/><path d="M13.1 7.6 L16.9 6.9 L16.9 13.5 L13.1 12.8 Z" fill="#4a9fcc" stroke="none"/><path d="M13.1 7.6 L14.4 7.4 L14.4 13.0 L13.1 12.8 Z" fill="#175a82" stroke="none"/><path d="M9.0 13.3 L13.1 12.8 L16.9 13.5 L9.0 15.9 Z" fill="#a4d8ee" stroke="none"/><path d="M9.0 8.3 L16.9 6.9 L16.9 13.5 L9.0 15.9 Z" fill="none" stroke="#1b5577" stroke-width="1"/></g>
  <g id="t_boss" stroke-linejoin="round">
   <path d="M10.500 4.500 L15 2.500 L20.500 5 L20.500 16 L16 18.800 L10.500 16.500 Z" fill="#f4f4f4" stroke="#3a3a3a" stroke-width="1"/>
   <path d="M16 7.200 L16 18.800 M10.500 4.500 L16 7.200 L20.500 5" fill="none" stroke="#666" stroke-width=".8"/>
   <path d="M3 7.500 L9 5.800 L14 7.800 L14 15.500 L8 18 L3 15.500 Z" fill="#5aaad6" stroke="#1b5577" stroke-width=".9"/>
   <path d="M3 7.500 L9 5.800 L14 7.800 L8 9.600 Z" fill="#a2d8ee" stroke="#1b5577" stroke-width=".7"/>
   <path d="M8 9.600 L14 7.800 L14 15.500 L8 18 Z" fill="#3f93c4" stroke="#1b5577" stroke-width=".7"/>
  </g>
  <g id="t_fillet" stroke-linejoin="round">
   <path d="M3 9 C3 5 6 3 10 3 L17 3 C19.500 3 20.500 5 20.500 7.500 L20.500 15 L13.500 19.800 L3 16.500 Z" fill="#f2f2f2" stroke="#555" stroke-width=".9"/>
   <path d="M6 5.500 C8 3.500 9.500 3 12 3 L17 3 C19.500 3 20.500 5 20.500 7.500 L20.500 8.500 L13.500 12.500 C13.500 9 11 6 6 5.500 Z" fill="#4a9fcc" stroke="#1b5577" stroke-width=".9"/>
   <path d="M13.500 12.500 L13.500 19.800" stroke="#555" stroke-width=".8"/>
  </g>
  <g id="t_axis"><path d="M4 18.500 L18.500 4.500" stroke="#333" stroke-width="1" stroke-dasharray="4 1.500 1.500 1.500" fill="none"/></g>
  <g id="t_cirp" stroke-width=".9" stroke-linejoin="round">
   <path d="M1.500 8 L4.500 8 L4.500 9.500 L7 9.500 L7 12.500 L4.500 12.500 L4.500 14 L1.500 14 Z" fill="#3f97c6" stroke="#1b5577"/>
   <path d="M20.500 8 L17.500 8 L17.500 9.500 L15 9.500 L15 12.500 L17.500 12.500 L17.500 14 L20.500 14 Z" fill="#fdfdfd" stroke="#444"/>
   <path d="M8 2 L14 2 L14 5 L12.500 5 L12.500 7.500 L9.500 7.500 L9.500 5 L8 5 Z" fill="#fdfdfd" stroke="#444"/>
   <path d="M8 20 L14 20 L14 17 L12.500 17 L12.500 14.500 L9.500 14.500 L9.500 17 L8 17 Z" fill="#fdfdfd" stroke="#444"/>
  </g>
  <g id="t_scale" stroke-linejoin="round">
   <path d="M6.200 6.300 L9.800 3.300 L19.600 3.300 L19.600 13.500 L16.200 16.800 L6.200 16.800 Z" fill="#8fd0ea" stroke="#1b5577" stroke-width="1"/>
   <path d="M6.200 6.300 L16.200 6.300 L16.200 16.800 L6.200 16.800 Z" fill="#5aaad6" stroke="#1b5577" stroke-width=".8"/>
   <path d="M16.200 6.300 L19.600 3.300 L19.600 13.500 L16.200 16.800 Z" fill="#2f85b6" stroke="#1b5577" stroke-width=".8"/>
   <path d="M2.400 12.500 L4.500 10.600 L9 10.600 L9 17.500 L6.800 19.600 L2.400 19.600 Z" fill="#f8f8f8" stroke="#333" stroke-width="1"/>
   <path d="M2.400 12.500 L6.800 12.500 L6.800 19.600 M6.800 12.500 L9 10.600" fill="none" stroke="#444" stroke-width=".8"/>
   <path d="M8.300 16.800 L14.500 10.800" stroke="#111" stroke-width="2" fill="none"/>
   <path d="M17.400 8 L16.700 13.300 L12 8.700 Z" fill="#111"/>
  </g>
  <g id="t_sketch" fill="none">
   <path d="M5 3 V18 M9 3 V18 M13 3 V18 M17 3 V18 M3 6 H20 M3 10 H20 M3 14 H20" stroke="#e4e4e4" stroke-width="1"/>
   <path d="M9 2.600 L16 2.600 M3 8 L3 14 C3 16.500 4.500 18 7 18 L19.500 18" stroke="#2a7dae" stroke-width="1.600"/>
   <path d="M5.300 1.600 V9 M1.600 5.300 H9 M2.700 2.700 L7.900 7.900 M7.900 2.700 L2.700 7.900" stroke="#e8821a" stroke-width=".9"/>
   <circle cx="5.300" cy="5.300" r="1.500" fill="#f6a43a" stroke="none"/>
  </g>
  <g id="t_sketch2" fill="none">
   <path d="M17 2.500 L7 2.500 C4.500 2.500 3 4 3 6.500 L3 14 C3 16.500 4.500 18 7 18 L19.500 18" stroke="#333" stroke-width="1"/>
   <path d="M4.500 1.500 V8.500 M1 5 H8 M2 2.500 L7 7.500 M7 2.500 L2 7.500" stroke="#222" stroke-width=".8"/>
  </g>
  <g id="t_hole" stroke-linejoin="round" stroke-linecap="round">
   <path d="M2.500 8 L8 5.200 L17 7 L17 16.800 L11.500 20.300 L2.500 17.800 Z" fill="#ececec" stroke="#2e2e2e" stroke-width="1.200"/>
   <path d="M2.500 8 L11.500 10.300 L17 7 M11.500 10.300 L11.500 20.300" fill="none" stroke="#555" stroke-width=".9"/>
   <ellipse cx="7" cy="14" rx="3.400" ry="3.800" fill="#4a9fcc" stroke="#1b5577" stroke-width=".9"/>
   <ellipse cx="7.800" cy="14.500" rx="1.900" ry="2.300" fill="#e4f2f9" stroke="#1b5577" stroke-width=".5"/>
   <path d="M12.300 4.300 L19.300 11.500" stroke="#1c1c1c" stroke-width="2.600"/>
   <g fill="#f08a1c"><circle cx="8.800" cy="3.800" r=".9"/><circle cx="12.200" cy="1.800" r=".9"/><circle cx="16" cy="2.600" r=".9"/><circle cx="18.600" cy="5.200" r=".8"/><circle cx="6" cy="6" r=".7"/></g>
  </g>
 </defs>
</svg>
<svg style="left:0;top:131px" width="134" height="561" viewBox="0 131 134 561">
 <g stroke-linejoin="round">
 <!-- feature manager tab icon -->
 <path d="M11.200 163.100 L14.200 162.400 L14.200 158.500 L18.900 157.100 L23.100 158.900 L23.100 163.900 L27.700 165.800 L27.700 171.200 L22.900 174.800 L11.200 166.600 Z" fill="#efc622" stroke="#94700a" stroke-width="1"/>
 <path d="M14.200 158.500 L18.900 157.100 L23.100 158.900 L18.500 160.400 Z" fill="#fbea8c" stroke="#94700a" stroke-width=".6"/>
 <path d="M18.500 160.400 L23.100 158.900 L23.100 163.900 L18.500 165 Z" fill="#f8e060" stroke="#94700a" stroke-width=".6"/>
 <path d="M18.500 165 L23.100 163.900 L27.700 165.800 L23.100 167.300 Z" fill="#fbea8c" stroke="#94700a" stroke-width=".6"/>
 <path d="M23.100 167.300 L27.700 165.800 L27.700 171.200 L22.900 174.800 Z" fill="#f8e060" stroke="#94700a" stroke-width=".6"/>
 <path d="M18.500 160.400 L18.500 165 L23.100 167.300 L23.100 174.500 M14.200 162.400 L18.500 165" fill="none" stroke="#94700a" stroke-width=".7"/>
 <!-- property manager icon -->
 <rect x="50.500" y="157.500" width="17" height="17.500" rx="1.500" fill="#fbfbfb" stroke="#444" stroke-width="1"/>
 <path d="M50.500 159 Q50.500 157.500 52 157.500 L66 157.500 Q67.500 157.500 67.500 159 L67.500 160.500 L50.500 160.500 Z" fill="#3f97c6" stroke="#1b5577" stroke-width=".8"/>
 <g fill="#3f97c6" stroke="#1b5577" stroke-width=".6"><rect x="52.500" y="162.500" width="3.500" height="2.200"/><rect x="52.500" y="166.500" width="3.500" height="2.200"/><rect x="52.500" y="170.500" width="3.500" height="2.200"/></g>
 <path d="M58 163.600 H65.500 M58 167.600 H65.500 M58 171.600 H65.500" stroke="#333" stroke-width="1"/>
 <!-- third tab partial icon -->
 <path d="M96 157.500 L92.500 157.500 L92.500 174.500 L95 174.500 M96.500 157.500 L102 157.500" fill="none" stroke="#222" stroke-width="1.100" stroke-linecap="butt" stroke-linejoin="miter"/>
 <rect x="127" y="157" width="2" height="1.200" fill="#333"/>
 <!-- scroll buttons -->
 <rect x="94" y="159" width="38" height="20" fill="#fafafa"/>
 <rect x="95.500" y="160.500" width="19" height="18" fill="#e9e9e9" stroke="#b9b9b9"/>
 <rect x="115.500" y="160.500" width="16" height="18" fill="#e9e9e9" stroke="#b9b9b9"/>
 <path d="M106 165.500 L106 171.500 L102.800 168.500 Z M122.700 165.500 L122.700 171.500 L125.900 168.500 Z" fill="#111"/>
 <!-- filter -->
 <path d="M5.800 188 L21.200 188 L15 195.500 L15 201.600 L11.400 199.500 L11.400 195.500 Z" fill="#fdfdfd" stroke="#3a3a3a" stroke-width="1"/>
 <path d="M13.600 195 L19.500 188.500 L20.600 188.500 L14.600 195.800 L14.600 200.600 L13.600 200 Z" fill="#bdbdbd"/>
 <rect x="5" y="184.300" width="17" height="3.800" rx="1.600" fill="#3f97c6" stroke="#1b5577" stroke-width=".8"/>
 <path d="M7 185.700 H20" stroke="#bfe3f3" stroke-width="1.100"/>
 <!-- scroll chevrons -->
 <path d="M122.300 216.200 L125.500 212.600 L128.700 216.200" fill="none" stroke="#5a5a5a" stroke-width="2.100" stroke-linejoin="miter" stroke-linecap="butt"/>
 <path d="M122.300 664.200 L125.500 667.800 L128.700 664.200" fill="none" stroke="#5a5a5a" stroke-width="2.100" stroke-linejoin="miter" stroke-linecap="butt"/>
 <!-- blue line -->
 <rect x="0" y="667" width="117" height="3" fill="#2a78cc"/><rect x="0" y="668" width="117" height="1.300" fill="#1a3fa8"/>
 <!-- h scrollbar -->
 <rect x="0" y="675" width="117" height="15" fill="#f0f0f0"/>
 <rect x="15" y="675" width="31" height="15" fill="#cdcdcd"/>
 <path d="M8.300 678.800 L4.500 682.600 L8.300 686.400" fill="none" stroke="#5a5a5a" stroke-width="1.900" stroke-linejoin="miter"/>
 <path d="M106.800 678.800 L110.600 682.600 L106.800 686.400" fill="none" stroke="#5a5a5a" stroke-width="1.900" stroke-linejoin="miter"/>
 <!-- splitter handle -->
 <rect x="132" y="382" width="9" height="37" fill="#f7f7f7"/><path d="M133.500 381.500 L141.500 381.500 L141.500 419.500 L133.500 419.500" fill="none" stroke="#808080" stroke-width="1"/>
 <circle cx="137" cy="400" r="2.600" fill="#d4d4d4" stroke="#a4a4a4" stroke-width=".8"/>
 </g>
</svg>
<!--LP-E-->

<!-- ===== model ===== -->
<!--MODEL-S-->
<svg style="left:134px;top:131px" width="1053" height="561" viewBox="134 131 1053 561">
 <defs>
  <linearGradient id="mb1" gradientUnits="userSpaceOnUse" x1="540" y1="370" x2="600" y2="450"><stop offset="0" stop-color="#8d90a9"/><stop offset=".45" stop-color="#7f829a"/><stop offset=".8" stop-color="#6d7087"/><stop offset="1" stop-color="#777a91"/></linearGradient>
  <linearGradient id="mb1b" gradientUnits="userSpaceOnUse" x1="560" y1="350" x2="600" y2="400"><stop offset="0" stop-color="#9497b0" stop-opacity=".7"/><stop offset="1" stop-color="#9497b0" stop-opacity="0"/></linearGradient>
  <linearGradient id="mb2" gradientUnits="userSpaceOnUse" x1="632" y1="400" x2="706" y2="420"><stop offset="0" stop-color="#7f829b"/><stop offset=".12" stop-color="#a2a5be"/><stop offset=".4" stop-color="#9194ad"/><stop offset="1" stop-color="#7e819a"/></linearGradient>
  <linearGradient id="mb2b" gradientUnits="userSpaceOnUse" x1="650" y1="345" x2="660" y2="400"><stop offset="0" stop-color="#777a92" stop-opacity=".75"/><stop offset="1" stop-color="#777a92" stop-opacity="0"/></linearGradient>
  <path id="bladeL" d="M559.900 348.600 C562.500 347.800 565.500 347.700 567.900 348.200 C570.800 348.900 573 350 574.900 352 C577 354.500 578.600 357.500 579.900 361 L587.900 380.900 L595.800 404.900 L602.200 429.500 C596.500 431.500 592 437 591 444.500 C590.700 450.500 592.300 455.500 595.500 459 L585.900 462.700 L571.900 468.700 C567 470.700 562.500 471.900 557.900 471.700 C552.500 470.500 548 467.500 544 462.700 C540 458 537 453.500 535 448.800 C532.800 443 531.500 437 531 430.800 C530.300 425.500 530 420 530 414.800 C530.400 408 531.500 401 533 394.900 C534.800 388 537 381.500 540 374.900 C542.800 368.500 546 362.500 549.900 357 C552.800 353 556 350 559.900 348.600 Z"/>
  <path id="bladeR" d="M660.900 344 C664 344.300 667 345.300 669.900 347 C673 349 675.600 351.300 677.900 354 C682.300 359 686.300 364.600 689.800 370.900 C693.300 376.600 696.300 382.600 698.800 388.900 C701.200 395.300 702.900 402 703.800 408.900 C704.900 414 705.400 419.300 705.400 424.800 C705.400 430.300 704.900 435.600 703.800 440.800 C702.600 445.300 701 449.300 698.800 452.800 C696.800 455.800 694.500 458.200 691.800 459.800 C690 460.600 688 460.900 685.800 460.700 L669.900 457.800 L643.900 452.800 L622 447.800 L617 447.500 C622 443 628 436 633 428.800 L635.900 414.800 L639.900 384.900 L642.900 364.900 C643.800 360.600 645 356.600 646.900 353 C648.600 350 650.600 347.600 652.900 346 C655.300 344.500 658 343.800 660.900 344 Z"/>
  <radialGradient id="mb3" gradientUnits="userSpaceOnUse" cx="650" cy="497" r="75"><stop offset="0" stop-color="#aaadc7"/><stop offset=".55" stop-color="#999cb6"/><stop offset="1" stop-color="#868aa3"/></radialGradient>
 </defs>
 <g stroke="#17171c" stroke-width="1.150" stroke-linejoin="round">
  <!-- bottom blade -->
  <path d="M595.800 459.800 L583 479.500 L569.200 498.400 L558.900 513 C556 517 555.200 521 557.200 529.300 C558.500 534 561 537.500 564 539.700 C570 543.500 576 546.500 583 549.100 C590 551.500 597 553.300 605.300 554.300 C612 555 619 555.200 625.900 554.800 C633 554.200 640 552.800 646.500 550.800 C654 548.500 661 546 667.100 543.100 C672 540.500 677 537.500 680.900 533.600 C685 530 687.500 526.500 688.600 522.500 C690.300 518 691 513 690.300 508.700 C689.500 504.500 688 500.500 686 496.700 L674 481.200 L660.300 467.500 L643.100 452.900 L629.300 457.200 L608.700 458.500 Z" fill="url(#mb3)"/>
  <!-- hub cylinder -->
  <path d="M606 429.700 L630.500 428.600 L633.500 426.500 L643.500 452.500 L629 457.500 L609 459 Z" fill="#8b8ea6"/>
  <path d="M616.200 447.300 L643.100 452.900 C636 456.500 622 459.500 608.500 459 Z" fill="#686b80" stroke-width=".9"/>
  <!-- left blade -->
  <use href="#bladeL" fill="url(#mb1)"/>
  <use href="#bladeL" fill="url(#mb1b)" stroke="none"/>
  <!-- right blade -->
  <use href="#bladeR" fill="url(#mb2)"/>
  <use href="#bladeR" fill="url(#mb2b)" stroke="none"/>
  <!-- hub front ring -->
  <ellipse cx="603.400" cy="444.500" rx="12.300" ry="14.700" fill="#9295ae"/>
  <ellipse cx="603.500" cy="444.500" rx="5" ry="6.300" fill="#9da0b9" stroke-width="1"/>
  <path d="M605.800 439.800 C608.300 442 608.300 447 605.600 449.800 C606.200 446.500 606.300 443 605.800 439.800 Z" fill="#30323e" stroke="none"/>
  <path d="M600.500 449.500 C601.500 450.800 603 451.200 604.500 450.600" fill="none" stroke-width=".8"/>
 </g>
 <g stroke="#101014" stroke-width=".9" fill="none">
  <path d="M579.900 392.900 L601.500 428.500 M581.300 391.300 L601.800 427.500 M582.700 389.900 L602 426.500 M584.100 388.700 L602.200 425.500 M585.500 387.700 L602.400 424.500"/>
  <path d="M641.500 383 L633.800 424.500 M643 383.600 L634.200 423 M644.500 384.200 L634.600 421.500 M646 384.800 L635 420 M647.500 385.400 L635.500 418.500"/>
  <path d="M617 447.500 C622 443 628 436 633 428.800 M619 447.600 C625 442.500 630 436.500 634 430.500"/>
 </g>
 <g fill="#17171c"><circle cx="637" cy="430.500" r=".9"/><circle cx="645.500" cy="438.500" r=".9"/><circle cx="643.800" cy="451" r=".9"/><circle cx="625.500" cy="446.500" r=".8"/></g>
 <!-- triad -->
 <g>
  <path d="M186.400 633.300 m-3.600 0 a3.600 4.200 0 1 0 7.200 0 a3.600 4.200 0 1 0 -7.200 0" fill="#1f6e1f"/>
  <path d="M175.200 633.400 L184 633.400" stroke="#1b561b" stroke-width="3.400"/>
  <path d="M175.200 633.300 L157.300 630.300" stroke="#c22a2a" stroke-width="3.400"/>
  <path d="M175.200 634.600 L157.300 631.600" stroke="#9a1e1e" stroke-width="1"/>
  <path d="M149.800 628.600 L158.200 625.900 L157 635 Z" fill="#8c1c1c"/>
  <path d="M175 633.300 L172.200 655.200" stroke="#4646e2" stroke-width="3.400"/>
  <path d="M176.200 634 L173.400 655.200" stroke="#2a2ac4" stroke-width="1.100"/>
  <path d="M170.900 662.900 L168 654.600 L176.900 655.700 Z" fill="#2222c0"/>
  <g font-family="Liberation Serif,serif" font-weight="700" font-size="11.600">
   <text x="142.800" y="631.800" fill="#f01414" textLength="5.600" lengthAdjust="spacingAndGlyphs">X</text>
   <text x="188.500" y="636.700" fill="#1a8a1a" textLength="5.600" lengthAdjust="spacingAndGlyphs">Y</text>
   <text x="166.900" y="671.800" fill="#1414f0" textLength="5.400" lengthAdjust="spacingAndGlyphs">Z</text>
  </g>
 </g>
</svg>
<!--MODEL-E-->

<!-- ===== task pane ===== -->
<!--TASK-S-->
<div class="abs" style="left:1161px;top:154px;width:26px;height:169px;background:#d9d9d9;border:1px solid #9c9c9c;border-right:none"></div>
<div class="abs" style="left:1161px;top:177px;width:26px;height:1px;background:#9c9c9c"></div>
<div class="abs" style="left:1161px;top:201px;width:26px;height:1px;background:#9c9c9c"></div>
<div class="abs" style="left:1161px;top:225px;width:26px;height:1px;background:#9c9c9c"></div>
<div class="abs" style="left:1162px;top:250px;width:25px;height:24px;background:#f8f8f8"></div><div class="abs" style="left:1161px;top:249px;width:26px;height:1px;background:#9c9c9c"></div>
<div class="abs" style="left:1161px;top:273px;width:26px;height:1px;background:#9c9c9c"></div>
<div class="abs" style="left:1161px;top:297px;width:26px;height:1px;background:#9c9c9c"></div>
<svg style="left:1160px;top:150px" width="27" height="176" viewBox="1160 150 27 176">
 <g stroke-linejoin="round">
 <!-- home -->
 <path d="M1167.500 166 L1167.500 174 L1180.500 174 L1180.500 166" fill="#fafafa" stroke="#444" stroke-width="1"/>
 <path d="M1165.500 166.500 L1174 158.500 L1182.500 166.500" fill="none" stroke="#1f6fa8" stroke-width="2"/>
 <rect x="1172.500" y="168" width="3.500" height="6" fill="#fafafa" stroke="#444" stroke-width=".9"/>
 <!-- library -->
 <path d="M1167.500 184.500 L1170.500 182.500 L1172 183.500 L1174.500 181.500 L1176 182.500 L1178.500 180.500 L1181 182 L1181 195 L1173 198.500 L1167.500 196 Z" fill="#f2f2f2" stroke="#444" stroke-width=".9"/>
 <path d="M1170.500 182.500 L1170.500 197.500 M1172 183.500 L1172 198 M1174.500 181.500 L1174.500 197.500 M1176 182.500 L1176 197 M1178.500 180.500 L1178.500 196" stroke="#444" stroke-width=".8" fill="none"/>
 <!-- folder -->
 <path d="M1165.500 206.500 L1171 206.500 L1173 209 L1180.500 209 L1180.500 221.500 L1165.500 221.500 Z" fill="#ececec" stroke="#444" stroke-width=".9"/>
 <path d="M1169.500 212.500 L1184 212.500 L1180 221.500 L1165.500 221.500 Z" fill="#fafafa" stroke="#444" stroke-width=".9"/>
 <!-- view palette -->
 <rect x="1165.500" y="230.500" width="17" height="15" fill="#f4f4f4" stroke="#444" stroke-width="1"/>
 <rect x="1167.500" y="232.500" width="7" height="4" fill="#f2c62a" stroke="#8a6a08" stroke-width=".7"/>
 <rect x="1176.500" y="232.500" width="4" height="4" fill="#f2c62a" stroke="#8a6a08" stroke-width=".7"/>
 <path d="M1167.500 239.500 h4.500 v2 h3 v-2 h5.500 v4 h-13 Z" fill="#f2c62a" stroke="#8a6a08" stroke-width=".7"/>
 <!-- appearances -->
 <defs><radialGradient id="gloss2" cx=".35" cy=".3" r=".75"><stop offset="0" stop-color="#fff" stop-opacity=".55"/><stop offset=".6" stop-color="#fff" stop-opacity="0"/><stop offset="1" stop-color="#000" stop-opacity=".18"/></radialGradient></defs>
 <circle cx="1174.00" cy="262.00" r="8.00" fill="#4a8fe0"/><path d="M1175.50 263.70 L1166.08 263.11 A8.00 8.00 0 0 1 1173.44 254.02 Z" fill="#4a8fe0"/><path d="M1175.50 263.70 L1173.44 254.02 A8.00 8.00 0 0 1 1181.92 263.11 Z" fill="#e8504a"/><path d="M1175.50 263.70 L1181.92 263.11 A8.00 8.00 0 0 1 1173.86 270.00 Z" fill="#f2c830"/><path d="M1175.50 263.70 L1173.86 270.00 A8.00 8.00 0 0 1 1166.08 263.11 Z" fill="#3cb43c"/><circle cx="1174.00" cy="262.00" r="8.00" fill="url(#gloss2)" stroke="#7a7a7a" stroke-width=".5"/>
 <!-- custom properties -->
 <rect x="1165.500" y="277.500" width="17" height="16" fill="#fbfbfb" stroke="#333" stroke-width="1"/>
 <rect x="1165.500" y="277.500" width="17" height="3" fill="#3f97c6" stroke="#1b5577" stroke-width=".7"/>
 <g fill="#3f97c6" stroke="#1b5577" stroke-width=".5"><rect x="1167.500" y="282.500" width="3" height="2"/><rect x="1167.500" y="286" width="3" height="2"/><rect x="1167.500" y="289.500" width="3" height="2"/></g>
 <path d="M1172.500 283.500 H1180.500 M1172.500 287 H1180.500 M1172.500 290.500 H1180.500" stroke="#333" stroke-width="1"/>
 <!-- forum -->
 <path d="M1165.500 302.500 L1178.500 302.500 L1178.500 311 L1170.500 311 L1167.500 314 L1167.500 311 L1165.500 311 Z" fill="#3f97c6" stroke="#1b5577" stroke-width=".9"/>
 <path d="M1170.500 307.500 L1183.500 307.500 L1183.500 315.500 L1181.500 315.500 L1181.500 318.500 L1178.500 315.500 L1170.500 315.500 Z" fill="#f7f7f7" stroke="#444" stroke-width=".9"/>
 </g>
</svg>
<!--TASK-E-->

<!-- ===== bottom ===== -->
<!--BOTTOM-S-->
<div class="abs" style="left:0;top:692px;width:1187px;height:1px;background:#a0a0a0"></div>
<div class="abs" style="left:0;top:692px;width:66px;height:15px;background:#c6c6c6;border-top:1px solid #4a4a4a"></div>
<div class="abs" style="left:256px;top:692px;width:930px;height:16px;background:#f7f7f7;border:1px solid #8a8a8a;border-right-color:#8ab0bc;border-top-color:#a0a0a0;border-left-color:#b0b0b0"></div>
<div class="btab" style="left:113px;width:60px;font-size:12.5px;text-align:left;padding-left:7.5px">3D 视图</div>
<div class="btab" style="left:172px;width:85px;font-size:12.5px;letter-spacing:-.25px;text-align:left;padding-left:7.5px">运动算例 1</div>
<div class="abs" style="left:66px;top:692px;width:47px;height:16px;background:#f7f7f7;font-size:13px;line-height:13.500px;text-align:center;padding-left:2px;color:#2a2a2a">模型</div>
<svg style="left:0;top:692px" width="70" height="16" viewBox="0 692 70 16">
 <g fill="#a2a2a2" stroke="none">
  <rect x="0" y="693" width="1" height="14" fill="#a9c6c8"/>
  <rect x="16" y="693" width="1" height="14" fill="#9e9e9e"/><rect x="32" y="693" width="1" height="14" fill="#9e9e9e"/><rect x="48" y="693" width="1" height="14" fill="#9e9e9e"/><rect x="65" y="693" width="1" height="14" fill="#9e9e9e"/>
  <path d="M12.500 695.500 L12.500 704.500 L6.500 700 Z M4.500 695.500 h1.600 v9 h-1.600 Z"/>
  <path d="M28 695.500 L28 704.500 L22 700 Z"/>
  <path d="M37.500 695.500 L37.500 704.500 L43.500 700 Z"/>
  <path d="M53 695.500 L53 704.500 L59 700 Z M59.500 695.500 h1.600 v9 h-1.600 Z"/>
 </g>
</svg>
<div id="status">
 <span style="position:absolute;left:1px;top:0;letter-spacing:-.36px">SOLIDWORKS Premium 2016 x64 <span style="font-size:12px;letter-spacing:0">版</span></span>
 <span style="position:absolute;left:908px;top:1px;font-size:12px">在编辑 零件</span>
 <span style="position:absolute;left:1023px;top:1px;font-size:12.5px">MMGS</span>
</div>
<div class="abs" style="left:896px;top:709px;width:1px;height:17px;background:#d9d9d9"></div>
<div class="abs" style="left:903px;top:709px;width:1px;height:17px;background:#d9d9d9"></div>
<div class="abs" style="left:979px;top:709px;width:1px;height:17px;background:#d9d9d9"></div>
<div class="abs" style="left:994px;top:709px;width:1px;height:17px;background:#d9d9d9"></div>
<div class="abs" style="left:0;top:725px;width:1187px;height:1px;background:#c9c9c9"></div><div class="abs" style="left:0;top:726px;width:1187px;height:1px;background:#4e4e4e"></div>
<svg style="left:1070px;top:708px" width="117" height="19" viewBox="1070 708 117 19">
 <path d="M1076 718.800 L1082 718.800 L1079 715.300 Z" fill="#333"/>
 <g stroke-linejoin="round">
 <path d="M1150.300 712.200 C1151 711.200 1154 710.700 1156.300 710.900 L1165 715.100 L1164.200 718 L1158 724.500 L1149.400 720.200 Z" fill="#f4f4f4" stroke="#222" stroke-width="1.300"/>
 <path d="M1149.800 717.800 L1158 722 L1164.600 715.600" fill="none" stroke="#222" stroke-width="1.100"/>
 <ellipse cx="1154.300" cy="714.300" rx="2.100" ry="1.800" fill="#f7f7f7" stroke="#222" stroke-width="1.100"/>
 <path d="M1157.300 717.300 L1158.800 715.700" stroke="#222" stroke-width="1.500"/>
 </g>
 <g fill="#b8b8b8"><rect x="1183" y="716" width="2" height="2"/><rect x="1183" y="719" width="2" height="2"/><rect x="1180" y="719" width="2" height="2"/><rect x="1183" y="722" width="2" height="2"/><rect x="1180" y="722" width="2" height="2"/><rect x="1177" y="722" width="2" height="2"/></g>
</svg>
<!--BOTTOM-E-->

</div>
<div id="wall"></div>
<div id="walledge"></div>
</body>
</html>
